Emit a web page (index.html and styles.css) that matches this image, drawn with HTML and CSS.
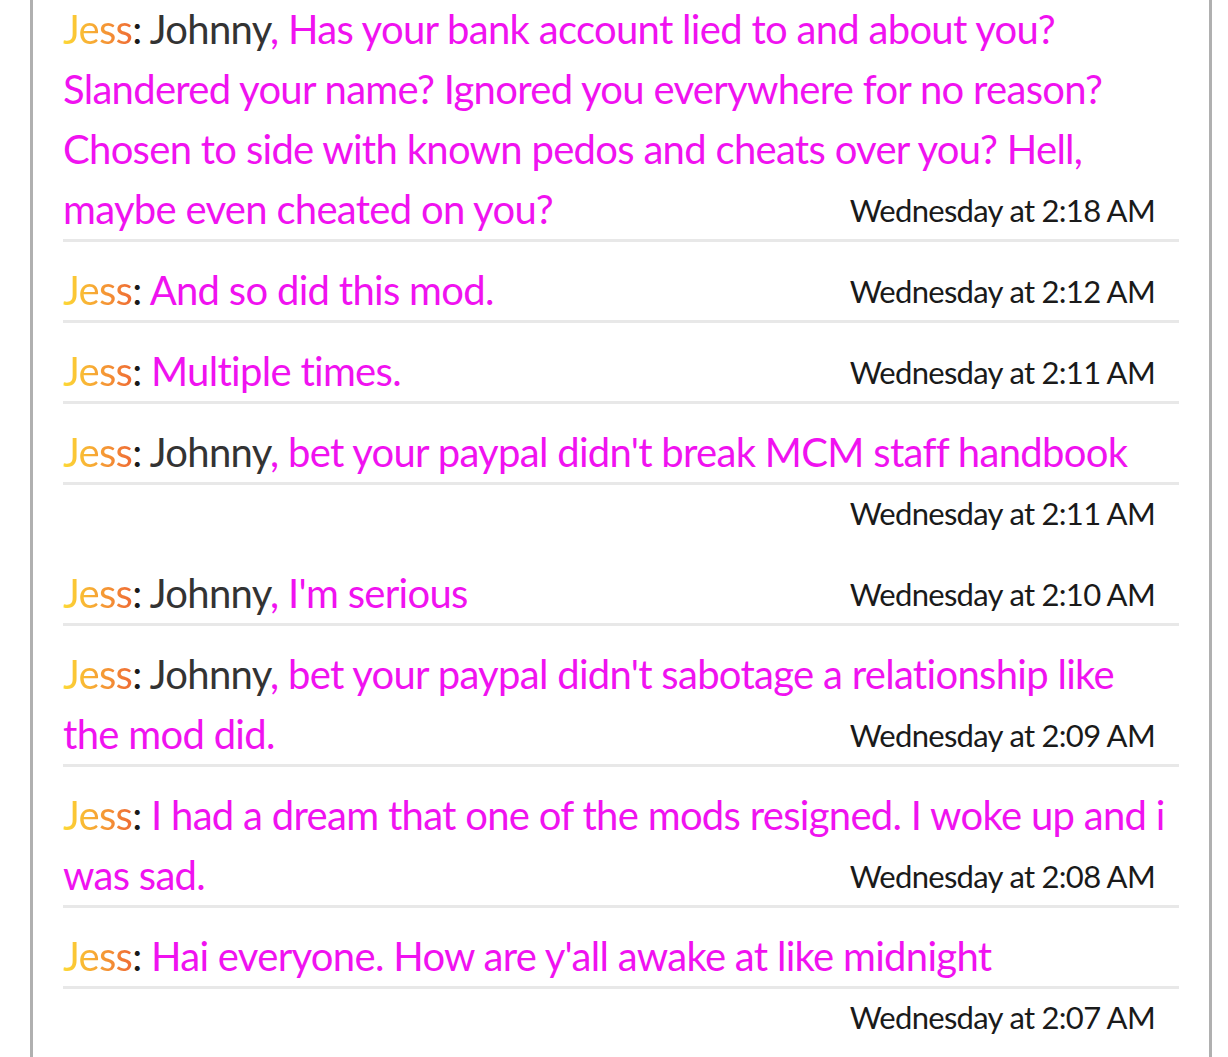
FILE: index.html
```html
<!DOCTYPE html>
<html>
<head>
<meta charset="utf-8">
<link rel="stylesheet" href="styles.css">
</head>
<body>
<div class="log">
  <div class="msg"><span class="name">Jess</span><span class="colon">:</span> <span class="to">Johnny</span><span class="text">, Has your bank account lied to and about you? Slandered your name? Ignored you everywhere for no reason? Chosen to side with known pedos and cheats over you? Hell, maybe even cheated on you?</span><span class="time">Wednesday at 2:18 AM</span></div>
  <div class="msg"><span class="name">Jess</span><span class="colon">:</span> <span class="text">And so did this mod.</span><span class="time">Wednesday at 2:12 AM</span></div>
  <div class="msg"><span class="name">Jess</span><span class="colon">:</span> <span class="text">Multiple times.</span><span class="time">Wednesday at 2:11 AM</span></div>
  <div class="msg"><span class="name">Jess</span><span class="colon">:</span> <span class="to">Johnny</span><span class="text">, bet your paypal didn't break MCM staff handbook</span><span class="time">Wednesday at 2:11 AM</span></div>
  <div class="msg"><span class="name">Jess</span><span class="colon">:</span> <span class="to">Johnny</span><span class="text">, I'm serious</span><span class="time">Wednesday at 2:10 AM</span></div>
  <div class="msg"><span class="name">Jess</span><span class="colon">:</span> <span class="to">Johnny</span><span class="text">, bet your paypal didn't sabotage a relationship like the mod did.</span><span class="time">Wednesday at 2:09 AM</span></div>
  <div class="msg"><span class="name">Jess</span><span class="colon">:</span> <span class="text">I had a dream that one of the mods resigned. I woke up and i was sad.</span><span class="time">Wednesday at 2:08 AM</span></div>
  <div class="msg"><span class="name">Jess</span><span class="colon">:</span> <span class="text">Hai everyone. How are y'all awake at like midnight</span><span class="time">Wednesday at 2:07 AM</span></div>
</div>
</body>
</html>
```
FILE: styles.css
```css
html, body {
  margin: 0;
  padding: 0;
  background: #ffffff;
  overflow: hidden;
}

body {
  font-family: Lato, "Liberation Sans", sans-serif;
  font-variant-ligatures: none;
}

.log {
  margin: -19px 16px 0 30px;
  padding: 0 30px;
  border-left: 3px solid #b0b0b0;
  border-right: 3px solid #b0b0b0;
  min-height: 1200px;
}

.msg {
  clear: both;
  padding: 18px 6px 0 0;
  border-bottom: 3px solid #e8e8e8;
  font-size: 40px;
  line-height: 60px;
  letter-spacing: -0.7px;
  color: #ff00ff;
}

.name {
  background: linear-gradient(to right, #fdd835 0%, #f7a934 45%, #ef6b35 100%);
  -webkit-background-clip: text;
  background-clip: text;
  color: transparent;
}

.colon {
  color: #1a1a1a;
}

.to {
  color: #333333;
}

.text {
  color: #f012f0;
}

.time {
  float: right;
  margin-right: 18px;
  font-size: 31px;
  line-height: 63px;
  letter-spacing: -0.7px;
  color: #1a1a1a;
}
```
